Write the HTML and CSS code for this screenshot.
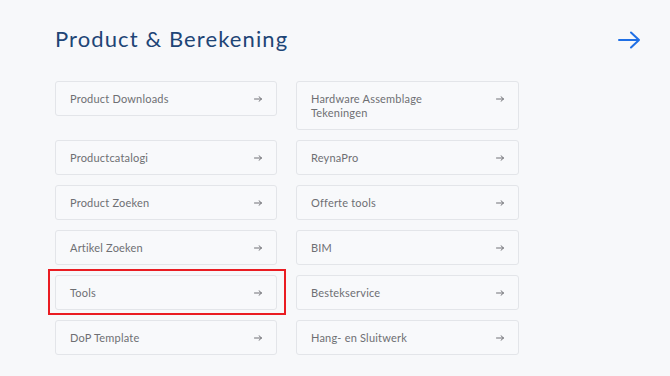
FILE: index.html
```html
<!DOCTYPE html>
<html lang="nl">
<head>
<meta charset="utf-8">
<title>Product &amp; Berekening</title>
<link rel="stylesheet" href="styles.css">
</head>
<body>
<main class="section">
  <header class="section-head">
    <h2 class="section-title">Product &amp; Berekening</h2>
    <a class="section-more" href="#" aria-label="Meer">
      <svg width="22" height="18" viewBox="0 0 22 18" fill="none" stroke="currentColor" stroke-width="2" stroke-linecap="round" stroke-linejoin="round"><path d="M1 9h20M13 1.5l8 7.5-8 7.5"/></svg>
    </a>
  </header>
  <div class="grid">
    <a class="card" href="#"><span class="card-label">Product Downloads</span><span class="card-arrow"><svg width="8" height="6" viewBox="0 0 8 6" fill="none" stroke="currentColor" stroke-width="1" stroke-linecap="round" stroke-linejoin="round"><path d="M0.5 3h7M5 0.7L7.5 3 5 5.3"/></svg></span></a>
    <a class="card" href="#"><span class="card-label narrow">Hardware Assemblage Tekeningen</span><span class="card-arrow"><svg width="8" height="6" viewBox="0 0 8 6" fill="none" stroke="currentColor" stroke-width="1" stroke-linecap="round" stroke-linejoin="round"><path d="M0.5 3h7M5 0.7L7.5 3 5 5.3"/></svg></span></a>
    <a class="card" href="#"><span class="card-label">Productcatalogi</span><span class="card-arrow"><svg width="8" height="6" viewBox="0 0 8 6" fill="none" stroke="currentColor" stroke-width="1" stroke-linecap="round" stroke-linejoin="round"><path d="M0.5 3h7M5 0.7L7.5 3 5 5.3"/></svg></span></a>
    <a class="card" href="#"><span class="card-label">ReynaPro</span><span class="card-arrow"><svg width="8" height="6" viewBox="0 0 8 6" fill="none" stroke="currentColor" stroke-width="1" stroke-linecap="round" stroke-linejoin="round"><path d="M0.5 3h7M5 0.7L7.5 3 5 5.3"/></svg></span></a>
    <a class="card" href="#"><span class="card-label">Product Zoeken</span><span class="card-arrow"><svg width="8" height="6" viewBox="0 0 8 6" fill="none" stroke="currentColor" stroke-width="1" stroke-linecap="round" stroke-linejoin="round"><path d="M0.5 3h7M5 0.7L7.5 3 5 5.3"/></svg></span></a>
    <a class="card" href="#"><span class="card-label">Offerte tools</span><span class="card-arrow"><svg width="8" height="6" viewBox="0 0 8 6" fill="none" stroke="currentColor" stroke-width="1" stroke-linecap="round" stroke-linejoin="round"><path d="M0.5 3h7M5 0.7L7.5 3 5 5.3"/></svg></span></a>
    <a class="card" href="#"><span class="card-label">Artikel Zoeken</span><span class="card-arrow"><svg width="8" height="6" viewBox="0 0 8 6" fill="none" stroke="currentColor" stroke-width="1" stroke-linecap="round" stroke-linejoin="round"><path d="M0.5 3h7M5 0.7L7.5 3 5 5.3"/></svg></span></a>
    <a class="card" href="#"><span class="card-label">BIM</span><span class="card-arrow"><svg width="8" height="6" viewBox="0 0 8 6" fill="none" stroke="currentColor" stroke-width="1" stroke-linecap="round" stroke-linejoin="round"><path d="M0.5 3h7M5 0.7L7.5 3 5 5.3"/></svg></span></a>
    <a class="card highlight" href="#"><span class="card-label">Tools</span><span class="card-arrow"><svg width="8" height="6" viewBox="0 0 8 6" fill="none" stroke="currentColor" stroke-width="1" stroke-linecap="round" stroke-linejoin="round"><path d="M0.5 3h7M5 0.7L7.5 3 5 5.3"/></svg></span></a>
    <a class="card" href="#"><span class="card-label">Bestekservice</span><span class="card-arrow"><svg width="8" height="6" viewBox="0 0 8 6" fill="none" stroke="currentColor" stroke-width="1" stroke-linecap="round" stroke-linejoin="round"><path d="M0.5 3h7M5 0.7L7.5 3 5 5.3"/></svg></span></a>
    <a class="card" href="#"><span class="card-label">DoP Template</span><span class="card-arrow"><svg width="8" height="6" viewBox="0 0 8 6" fill="none" stroke="currentColor" stroke-width="1" stroke-linecap="round" stroke-linejoin="round"><path d="M0.5 3h7M5 0.7L7.5 3 5 5.3"/></svg></span></a>
    <a class="card" href="#"><span class="card-label">Hang- en Sluitwerk</span><span class="card-arrow"><svg width="8" height="6" viewBox="0 0 8 6" fill="none" stroke="currentColor" stroke-width="1" stroke-linecap="round" stroke-linejoin="round"><path d="M0.5 3h7M5 0.7L7.5 3 5 5.3"/></svg></span></a>
  </div>
</main>
</body>
</html>
```

FILE: styles.css
```css
html, body {
  margin: 0;
  padding: 0;
  background: #f7f8fa;
}
body {
  font-family: "Lato", "Liberation Sans", sans-serif;
  width: 670px;
  height: 376px;
  overflow: hidden;
}
.section {
  padding: 25px 30px 0 55px;
}
.section-head {
  display: flex;
  align-items: center;
  justify-content: space-between;
  height: 28px;
  margin-bottom: 28px;
}
.section-title {
  margin: 0;
  font-size: 22px;
  line-height: 28px;
  font-weight: 400;
  letter-spacing: 1.1px;
  color: #1e4576;
}
.section-more {
  display: flex;
  color: #1f6fe5;
  margin-top: 2px;
}
.grid {
  display: grid;
  grid-template-columns: 222px 223px;
  column-gap: 19px;
  row-gap: 10px;
  align-items: start;
}
.card {
  display: flex;
  align-items: flex-start;
  justify-content: space-between;
  padding: 10px 14px 9px 14px;
  border: 1px solid #e3e5e9;
  border-radius: 3px;
  background: #f8f9fb;
  text-decoration: none;
  color: #6e6f73;
  font-size: 11px;
  line-height: 14px;
  letter-spacing: 0.2px;
}
.card-label.narrow {
  max-width: 150px;
}
.card-arrow {
  display: flex;
  align-items: center;
  height: 14px;
  color: #707176;
}
.highlight {
  position: relative;
}
.highlight::after {
  content: "";
  position: absolute;
  top: -7px;
  left: -8px;
  right: -10px;
  bottom: -6px;
  border: 2px solid #ea1c22;
  pointer-events: none;
}
```
